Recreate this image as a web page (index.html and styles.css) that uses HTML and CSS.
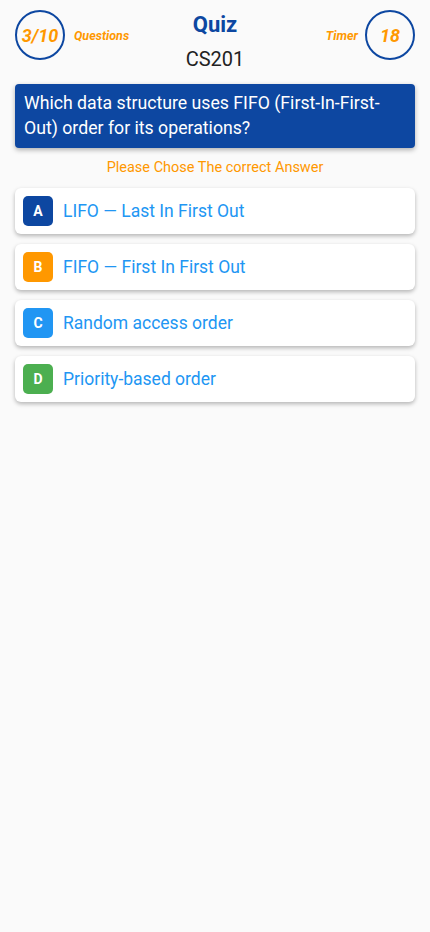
FILE: index.html
```html
<html>
<head>
  <link rel="stylesheet" href="styles.css">
</head>
<body>
  <div class="header">
    <div class="side">
      <div class="circle">3/10</div>
      <div class="side-label">Questions</div>
    </div>
    <div class="title">
      <div class="quiz">Quiz</div>
      <div class="course">CS201</div>
    </div>
    <div class="side right">
      <div class="side-label">Timer</div>
      <div class="circle">18</div>
    </div>
  </div>
  <div class="question">Which data structure uses FIFO (First-In-First-Out) order for its operations?</div>
  <div class="hint">Please Chose The correct Answer</div>
  <div class="options">
    <div class="option"><div class="badge a">A</div><div class="opt-text">LIFO — Last In First Out</div></div>
    <div class="option"><div class="badge b">B</div><div class="opt-text">FIFO — First In First Out</div></div>
    <div class="option"><div class="badge c">C</div><div class="opt-text">Random access order</div></div>
    <div class="option"><div class="badge d">D</div><div class="opt-text">Priority-based order</div></div>
  </div>
</body>
</html>
```
FILE: styles.css
```css
html, body {
  margin: 0;
  padding: 0;
  background: #fafafa;
  font-family: Roboto, 'Noto Sans', Arial, sans-serif;
}
.header {
  display: flex;
  justify-content: space-between;
  align-items: flex-start;
  padding: 10px 15px 0 15px;
  height: 84px;
  box-sizing: border-box;
}
.side {
  display: flex;
  align-items: center;
  width: 130px;
}
.side.right {
  justify-content: flex-end;
}
.circle {
  width: 50px;
  height: 50px;
  box-sizing: border-box;
  border: 2px solid #0d47a1;
  border-radius: 50%;
  display: flex;
  align-items: center;
  justify-content: center;
  color: #ff9800;
  font-size: 18px;
  font-weight: bold;
  font-style: italic;
}
.side-label {
  color: #ff9800;
  font-size: 12.5px;
  font-weight: bold;
  font-style: italic;
  margin: 0 8px 0 9px;
}
.side.right .side-label {
  margin: 0 7px 0 0;
}
.title {
  text-align: center;
}
.quiz {
  color: #0d47a1;
  font-size: 22px;
  font-weight: bold;
  line-height: 30px;
}
.course {
  color: #222;
  font-size: 20px;
  line-height: 30px;
  margin-top: 4px;
}
.question {
  margin: 0 15px;
  background: #0d47a1;
  color: #fff;
  font-size: 17.7px;
  line-height: 25px;
  padding: 7px 9px 7px 9px;
  border-radius: 4px;
  box-shadow: 0 2px 5px rgba(0,0,0,0.3);
}
.hint {
  text-align: center;
  color: #ff9800;
  font-size: 14.5px;
  margin: 11px 0 12px 0;
}
.options {
  display: flex;
  flex-direction: column;
  gap: 10px;
  margin: 0 15px;
}
.option {
  display: flex;
  align-items: center;
  background: #fff;
  border-radius: 6px;
  height: 46px;
  padding: 0 8px;
  box-shadow: 0 2px 4px rgba(0,0,0,0.28);
}
.badge {
  width: 30px;
  height: 30px;
  border-radius: 5px;
  color: #fff;
  font-weight: bold;
  font-size: 14px;
  display: flex;
  align-items: center;
  justify-content: center;
  margin-right: 10px;
}
.badge.a { background: #0d47a1; }
.badge.b { background: #ff9800; }
.badge.c { background: #2196f3; }
.badge.d { background: #4caf50; }
.opt-text {
  color: #2196f3;
  font-size: 17.5px;
}
```
